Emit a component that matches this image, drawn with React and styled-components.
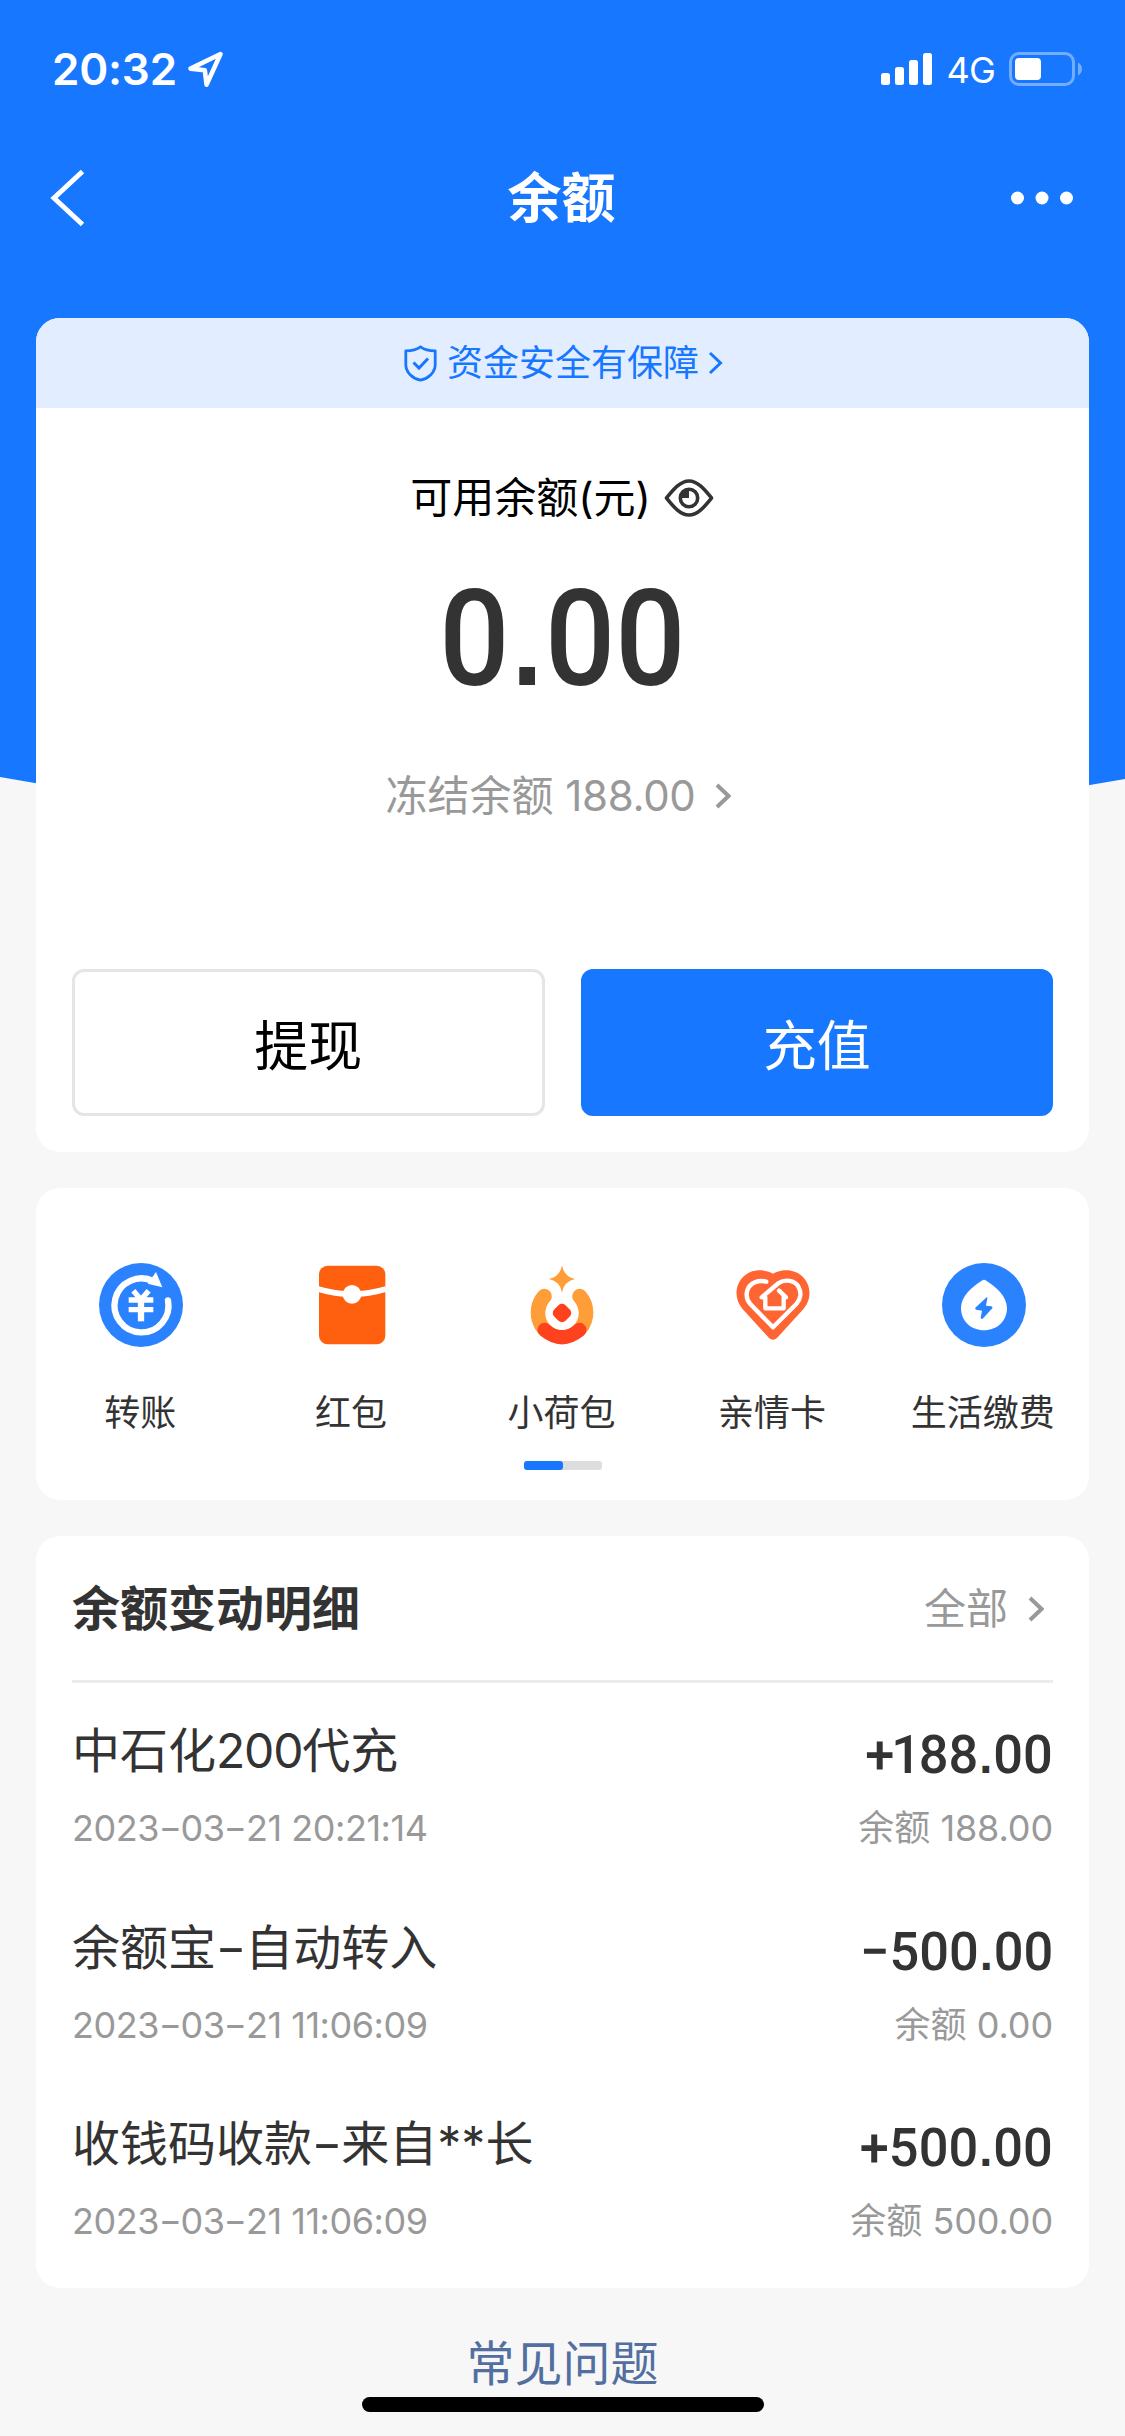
import React from "react";
import styled, { createGlobalStyle } from "styled-components";

const BLUE = "#1777ff";

const GlobalStyle = createGlobalStyle`
  * { box-sizing: border-box; }
  body {
    margin: 0;
    background: #f7f7f7;
    font-family: Inter, "Noto Sans CJK SC", sans-serif;
    color: #333;
  }
  button { font-family: inherit; padding: 0; margin: 0; }
  svg { display: block; flex: none; }
`;

const Screen = styled.div`
  position: relative;
  width: 1125px;
  height: 2436px;
  overflow: hidden;
  display: flex;
  flex-direction: column;
`;

const Backdrop = styled.svg`
  position: absolute;
  left: 0;
  top: 0;
  z-index: -1;
`;

const StatusBar = styled.div`
  height: 132px;
  padding: 6px 43px 0 52px;
  display: flex;
  align-items: center;
  justify-content: space-between;
  color: #fff;
`;

const StatusGroup = styled.div`
  display: flex;
  align-items: center;
  gap: ${(p) => p.$gap}px;
`;

const Clock = styled.span`
  font-size: 44px;
  line-height: 54px;
  font-weight: 600;
  letter-spacing: -0.2px;
`;

const Network = styled.span`
  font-size: 36px;
  line-height: 44px;
  padding-top: 2px;
  letter-spacing: -0.8px;
`;

const NavBar = styled.header`
  height: 132px;
  padding: 0 50px;
  display: grid;
  grid-template-columns: 1fr auto 1fr;
  align-items: center;
  color: #fff;
  & > :last-child { justify-self: end; }
`;

const NavTitle = styled.h1`
  margin: 0;
  padding: 2px 2px 0 0;
  font-size: 54px;
  line-height: 72px;
  font-weight: 600;
`;

const Content = styled.main`
  padding: 54px 36px 0;
  display: flex;
  flex-direction: column;
  gap: 36px;
`;

const Card = styled.section`
  height: ${(p) => p.$height}px;
  background: #fff;
  border-radius: 24px;
  overflow: hidden;
  display: flex;
  flex-direction: column;
`;

const SafetyBanner = styled.div`
  height: 90px;
  padding-left: 2px;
  background: #e2eeff;
  color: ${BLUE};
  display: flex;
  align-items: center;
  justify-content: center;
  font-size: 36px;
  line-height: 54px;
  & > span { margin: 0 9px 0 10px; }
`;

const BalanceLabel = styled.div`
  margin-top: 60px;
  height: 60px;
  display: flex;
  align-items: center;
  justify-content: center;
  gap: 13px;
  padding-right: 1px;
  font-size: 42px;
  line-height: 60px;
  color: #000;
`;

const BalanceValue = styled.div`
  margin-top: 34px;
  height: 156px;
  text-align: center;
  font-family: Roboto, sans-serif;
  font-size: 133px;
  line-height: 156px;
  font-weight: 480;
  transform: scaleX(0.93);
`;

const Dot = styled.span`
  font-family: "Liberation Sans", sans-serif;
  font-weight: 700;
  font-size: 0.9em;
  line-height: 1;
  margin: 0 0.02em;
`;

const NarrowOne = styled.span`
  margin: 0 -0.045em 0 -0.06em;
`;

const Dash = styled.span`
  display: inline-block;
  margin: 0 0.075em;
  transform: scaleX(1.4);
`;

const FrozenLine = styled.div`
  margin-top: 48px;
  height: 60px;
  display: flex;
  align-items: center;
  justify-content: center;
  font-size: 42px;
  line-height: 60px;
  color: #999;
  & > svg { margin: 0 8px 0 20px; }
`;

const Num = styled.span`
  letter-spacing: ${(p) => p.$track || "-0.025em"};
`;

const Actions = styled.div`
  margin: 143px 36px 0;
  display: grid;
  grid-template-columns: 1fr 1fr;
  gap: 36px;
`;

const ActionButton = styled.button`
  height: 147px;
  border-radius: 12px;
  border: 3px solid ${(p) => (p.$primary ? BLUE : "#e5e5e5")};
  background: ${(p) => (p.$primary ? BLUE : "#fff")};
  color: ${(p) => (p.$primary ? "#fff" : "#000")};
  font-size: 54px;
  line-height: 80px;
  padding-top: 9px;
`;

const Shortcuts = styled.div`
  margin-top: 75px;
  display: grid;
  grid-template-columns: repeat(5, 1fr);
`;

const Shortcut = styled.div`
  display: flex;
  flex-direction: column;
  align-items: center;
  gap: 39px;
  font-size: 36px;
  line-height: 54px;
  white-space: nowrap;
  & > span { padding-right: 2px; }
`;

const Pager = styled.div`
  margin: 21px auto 0;
  width: 78px;
  height: 9px;
  border-radius: 3px;
  background: #ddd;
`;

const PagerThumb = styled.div`
  width: 50%;
  height: 100%;
  border-radius: 3px;
  background: ${BLUE};
`;

const ListHeader = styled.div`
  margin: 0 36px;
  height: 147px;
  border-bottom: 3px solid #ececec;
  display: flex;
  align-items: center;
  justify-content: space-between;
`;

const ListTitle = styled.h2`
  margin: 0;
  padding-top: 2px;
  font-size: 48px;
  line-height: 72px;
  font-weight: 600;
`;

const AllLink = styled.div`
  display: flex;
  align-items: center;
  gap: 20px;
  padding: 1px 9px 0 0;
  font-size: 42px;
  line-height: 60px;
  color: #999;
`;

const Records = styled.div`
  padding: 0 36px;
`;

const Record = styled.div`
  height: 196.5px;
  padding-top: 32px;
  display: grid;
  grid-template-columns: auto auto;
  justify-content: space-between;
  grid-template-rows: 72px 54px;
  row-gap: 14px;
  white-space: nowrap;
`;

const RecordTitle = styled.div`
  font-size: 48px;
  line-height: 72px;
`;

const Amount = styled.div`
  font-family: Roboto, sans-serif;
  font-size: 54px;
  line-height: 79px;
  font-weight: 500;
  text-align: right;
  transform: scaleX(0.97);
  transform-origin: right;
`;

const RecordNote = styled.div`
  font-size: 36px;
  line-height: 54px;
  color: #999;
  text-align: ${(p) => p.$align || "left"};
`;

const HelpLink = styled.a`
  margin-top: 4px;
  text-align: center;
  font-size: 48px;
  line-height: 72px;
  color: #526f9f;
`;

const HomeIndicator = styled.div`
  position: absolute;
  left: 362px;
  bottom: 24px;
  width: 402px;
  height: 15px;
  border-radius: 8px;
  background: #000;
`;

const Figures = ({ value }) =>
  value.split("").map((c, i) => {
    if (c === ".") return <Dot key={i}>.</Dot>;
    if (c === "1") return <NarrowOne key={i}>1</NarrowOne>;
    return c;
  });

const Dashed = ({ text }) =>
  text.split("-").map((part, i) => (
    <React.Fragment key={i}>
      {i > 0 && <Dash>-</Dash>}
      {part}
    </React.Fragment>
  ));

const Chevron = ({ width = 16, height = 26, stroke = 4 }) => (
  <svg width={width} height={height} viewBox={`0 0 ${width} ${height}`} fill="none">
    <path
      d={`M2 2L${width - 2.5} ${height / 2}L2 ${height - 2}`}
      stroke="currentColor"
      strokeWidth={stroke}
    />
  </svg>
);

const LocationIcon = () => (
  <svg width="37" height="37" viewBox="0 0 37 37" fill="none">
    <path d="M33.5 3L3.5 17.6L17.8 19.2L19.6 33.6Z" stroke="#fff" strokeWidth="4.6" strokeLinejoin="round" />
  </svg>
);

const SignalIcon = () => (
  <svg width="51" height="32" viewBox="0 0 51 32" fill="#fff">
    <rect x="0" y="20" width="9" height="12" rx="2.5" />
    <rect x="14" y="14" width="9" height="18" rx="2.5" />
    <rect x="28" y="7" width="9" height="25" rx="2.5" />
    <rect x="42" y="0" width="9" height="32" rx="2.5" />
  </svg>
);

const BatteryIcon = () => (
  <svg width="73" height="34" viewBox="0 0 73 34">
    <rect x="1.5" y="1.5" width="63" height="31" rx="8.5" fill="none" stroke="#fff" strokeOpacity=".4" strokeWidth="3" />
    <rect x="6" y="6" width="26" height="22" rx="4" fill="#fff" />
    <path d="M69 10.5C71.6 11.8 73 14.2 73 17C73 19.8 71.6 22.2 69 23.5Z" fill="#fff" fillOpacity=".4" />
  </svg>
);

const BackIcon = () => (
  <svg width="36" height="58" viewBox="0 0 36 58" fill="none">
    <path d="M32.5 2.5L4 29L32.5 55.5" stroke="#fff" strokeWidth="5" />
  </svg>
);

const MoreIcon = () => (
  <svg width="65" height="14" viewBox="0 0 65 14" fill="#fff">
    <circle cx="7.5" cy="7" r="6.5" />
    <circle cx="32" cy="7" r="6.5" />
    <circle cx="56.5" cy="7" r="6.5" />
  </svg>
);

const ShieldIcon = () => (
  <svg width="33" height="37" viewBox="0 0 33 37" fill="none" stroke={BLUE} strokeWidth="2.8">
    <path d="M16.5 1.8C12.5 4.8 7.5 5.8 1.8 5.8V19.5C1.8 27.5 8.5 33.5 16.5 35.2C24.5 33.5 31.2 27.5 31.2 19.5V5.8C25.5 5.8 20.5 4.8 16.5 1.8Z" strokeLinejoin="round" />
    <path d="M9.5 17.5L15 23L24 13.5" strokeWidth="3" />
  </svg>
);

const EyeIcon = () => (
  <svg width="50" height="40" viewBox="0 0 50 40" fill="none" stroke="#333">
    <path d="M2.5 20C9 12 16 3 25 3C34 3 41 12 47.5 20C41 28 34 37 25 37C16 37 9 28 2.5 20Z" strokeWidth="3.6" strokeLinejoin="round" />
    <circle cx="25" cy="20" r="8.7" strokeWidth="3.6" />
    <path d="M25 12V20H17.5C17 16 20 12 25 12Z" fill="#333" stroke="none" />
  </svg>
);

const TransferIcon = () => (
  <svg width="84" height="84" viewBox="-126 -126 252 252" fill="none">
    <circle r="126" fill="#2a82ff" />
    <path d="M81 -14A81 81 0 1 1 38 -71" stroke="#fff" strokeWidth="19" strokeLinecap="round" />
    <path d="M45 -99L64 -53L20 -64Z" fill="#fff" />
    <path d="M-23 -43L0 -16L23 -43M-37 -15H37M-37 14H37" stroke="#fff" strokeWidth="16" />
    <path d="M0 -20V49" stroke="#fff" strokeWidth="19" />
  </svg>
);

const RedPacketIcon = () => (
  <svg width="84" height="84" viewBox="-126 -126 252 252" fill="none">
    <rect x="-99" y="-118" width="199" height="236" rx="26" fill="#ff6010" />
    <path d="M-102 -48Q0 -17 102 -48" stroke="#fff" strokeWidth="17" />
    <circle cy="-32" r="28" fill="#fff" />
  </svg>
);

const PouchIcon = () => (
  <svg width="84" height="84" viewBox="61 39 252 252" fill="none">
    <path d="M134 139A73 73 0 0 0 133 235M240 139A73 73 0 0 1 241 235" stroke="#ff9e38" strokeWidth="45" strokeLinecap="round" />
    <path d="M135 240Q187 282 239 240" stroke="#ff421e" strokeWidth="43" strokeLinecap="round" />
    <circle cx="187" cy="190" r="50" fill="#fff" />
    <path d="M187 46Q193 80 226 87Q193 94 187 128Q181 94 148 87Q181 80 187 46Z" fill="#ff9e38" />
    <rect x="163" y="165" width="48" height="48" rx="15" transform="rotate(45 187 189)" fill="#ff421e" />
  </svg>
);

const FamilyCardIcon = () => (
  <svg width="84" height="84" viewBox="694 39 252 252" fill="none">
    <path d="M820 71C842 58 878 55 903 75C934 100 939 145 912 176L832 264Q820 275 808 264L728 176C702 145 705 100 737 75C762 56 798 58 820 71Z" fill="#ff6533" />
    <path
      d="M800 95C777 89 753 97 744 118C738 135 742 151 752 162L820 232L890 162C903 148 906 128 897 112C887 91 856 86 837 99L786 142H797V175H852V142H859L838 122"
      stroke="#fff"
      strokeWidth="13"
      strokeLinecap="round"
      strokeLinejoin="round"
    />
  </svg>
);

const UtilityIcon = () => (
  <svg width="84" height="84" viewBox="-126 -126 252 252">
    <circle r="126" fill="#2a82ff" />
    <path d="M-7 -73Q0 -79 7 -73C36 -54 69 -28 69 10C69 48 39 76 0 76C-39 76 -69 48 -69 10C-69 -28 -36 -54 -7 -73Z" fill="#fff" />
    <path d="M8 -23L-26 8Q-28 13 -23 14L-6 17L-10 38Q-9 43 -4 41L25 10Q27 5 22 4L6 2L10 -20Q11 -25 8 -23Z" fill="#2a82ff" />
  </svg>
);

const shortcuts = [
  { label: "转账", Icon: TransferIcon },
  { label: "红包", Icon: RedPacketIcon },
  { label: "小荷包", Icon: PouchIcon },
  { label: "亲情卡", Icon: FamilyCardIcon },
  { label: "生活缴费", Icon: UtilityIcon },
];

const records = [
  { title: <>中石化<Num>200</Num>代充</>, time: "2023-03-21 20:21:14", amount: "+188.00", balance: "188.00" },
  { title: <Dashed text="余额宝-自动转入" />, time: "2023-03-21 11:06:09", amount: "−500.00", balance: "0.00" },
  { title: <Dashed text="收钱码收款-来自**长" />, time: "2023-03-21 11:06:09", amount: "+500.00", balance: "500.00" },
];

export default function App() {
  return (
    <>
      <GlobalStyle />
      <Screen>
        <Backdrop width="1125" height="830" viewBox="0 0 1125 830">
          <path d="M0 0H1125V779Q562 880 0 777Z" fill={BLUE} />
        </Backdrop>

        <StatusBar>
          <StatusGroup $gap={10}>
            <Clock>20:32</Clock>
            <LocationIcon />
          </StatusGroup>
          <StatusGroup $gap={14}>
            <SignalIcon />
            <Network>4G</Network>
            <BatteryIcon />
          </StatusGroup>
        </StatusBar>

        <NavBar>
          <BackIcon />
          <NavTitle>余额</NavTitle>
          <MoreIcon />
        </NavBar>

        <Content>
          <Card $height={834}>
            <SafetyBanner>
              <ShieldIcon />
              <span>资金安全有保障</span>
              <Chevron width={15} height={24} stroke={3} />
            </SafetyBanner>
            <BalanceLabel>
              <span>可用余额(元)</span>
              <EyeIcon />
            </BalanceLabel>
            <BalanceValue><Figures value="0.00" /></BalanceValue>
            <FrozenLine>
              <span>冻结余额 <Num $track="-0.008em">188.00</Num></span>
              <Chevron />
            </FrozenLine>
            <Actions>
              <ActionButton>提现</ActionButton>
              <ActionButton $primary>充值</ActionButton>
            </Actions>
          </Card>

          <Card $height={312}>
            <Shortcuts>
              {shortcuts.map(({ label, Icon }) => (
                <Shortcut key={label}>
                  <Icon />
                  <span>{label}</span>
                </Shortcut>
              ))}
            </Shortcuts>
            <Pager>
              <PagerThumb />
            </Pager>
          </Card>

          <Card $height={752}>
            <ListHeader>
              <ListTitle>余额变动明细</ListTitle>
              <AllLink>
                <span>全部</span>
                <Chevron />
              </AllLink>
            </ListHeader>
            <Records>
              {records.map((r, i) => (
                <Record key={i}>
                  <RecordTitle>{r.title}</RecordTitle>
                  <Amount><Figures value={r.amount} /></Amount>
                  <RecordNote><Num $track="-0.013em"><Dashed text={r.time} /></Num></RecordNote>
                  <RecordNote $align="right">余额 <Num $track="-0.003em">{r.balance}</Num></RecordNote>
                </Record>
              ))}
            </Records>
          </Card>

          <HelpLink>常见问题</HelpLink>
        </Content>
        <HomeIndicator />
      </Screen>
    </>
  );
}
